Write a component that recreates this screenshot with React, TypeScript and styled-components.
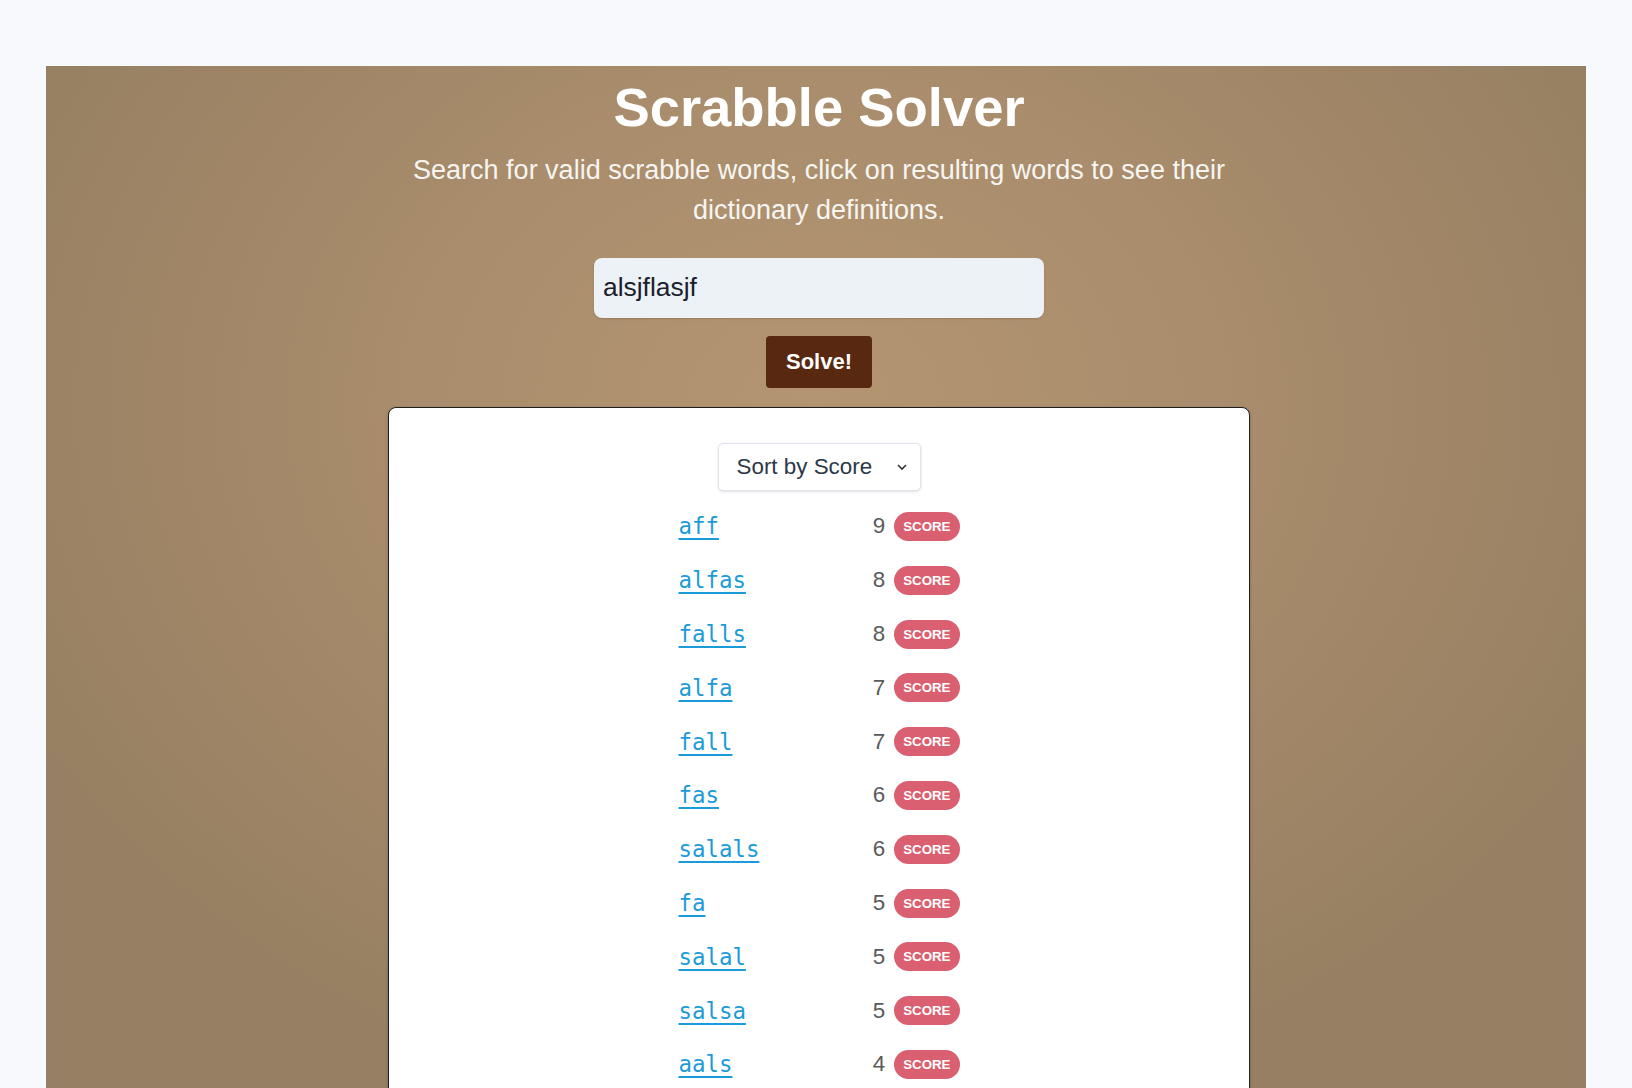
import React from "react";
import styled, { createGlobalStyle } from "styled-components";

const GlobalStyle = createGlobalStyle`
  html, body {
    margin: 0;
    padding: 0;
    background: #f7f9fd;
    font-family: "Liberation Sans", Arial, sans-serif;
  }
  * { box-sizing: border-box; }
`;

const Page = styled.div`
  padding: 66px 46px 0;
  height: 1088px;
  overflow: hidden;
`;

const Panel = styled.main`
  display: flex;
  flex-direction: column;
  align-items: center;
  padding: 11px 0 60px 6px;
  min-height: 1100px;
  background: radial-gradient(
    ellipse 900px 720px at 50% 340px,
    #b49571 0%,
    #a98d6c 45%,
    #967f62 100%
  );
`;

const Title = styled.h1`
  margin: 0;
  font-size: 54.4px;
  line-height: 1.15;
  font-weight: 700;
  color: #ffffff;
`;

const Subtitle = styled.p`
  margin: 10px 0 27px;
  max-width: 840px;
  text-align: center;
  font-size: 27px;
  line-height: 1.5;
  color: #f7f5f2;
`;

const SearchInput = styled.input`
  width: 450px;
  height: 60px;
  padding: 0 9px;
  border: none;
  border-radius: 8px;
  background: #edf2f7;
  box-shadow: 0 1px 2px rgba(0, 0, 0, 0.15);
  font-family: "Liberation Sans", Arial, sans-serif;
  font-size: 26.4px;
  color: #1a202c;
  outline: none;
`;

const SolveButton = styled.button`
  margin-top: 18px;
  height: 52px;
  padding: 0 19.5px;
  border: none;
  border-radius: 4px;
  background: #582810;
  color: #ffffff;
  font-family: "Liberation Sans", Arial, sans-serif;
  font-weight: 700;
  font-size: 22px;
  cursor: pointer;
`;

const ResultsCard = styled.section`
  margin-top: 19px;
  width: 862px;
  min-height: 760px;
  padding: 35px 0 24px;
  display: flex;
  flex-direction: column;
  align-items: center;
  background: #ffffff;
  border: 1px solid #1f1f1f;
  border-radius: 8px;
  box-shadow: 0 1px 3px rgba(0, 0, 0, 0.25);
`;

const SelectWrap = styled.div`
  position: relative;
  width: 203px;
  height: 48px;
  margin-bottom: 9px;
`;

const SortSelect = styled.select`
  appearance: none;
  -webkit-appearance: none;
  width: 100%;
  height: 100%;
  padding: 0 0 0 18px;
  border: 1px solid #dfe4ec;
  border-radius: 5px;
  background: #ffffff;
  box-shadow: 0 1px 3px rgba(0, 0, 0, 0.12);
  font-family: "Liberation Sans", Arial, sans-serif;
  font-size: 22.4px;
  color: #2d3748;
  outline: none;
`;

const Chevron = styled.svg`
  position: absolute;
  right: 13px;
  top: 50%;
  transform: translateY(-50%);
  pointer-events: none;
`;

const WordList = styled.ul`
  list-style: none;
  margin: 0;
  padding: 0;
  display: flex;
  flex-direction: column;
`;

const WordRow = styled.li`
  width: 281px;
  height: 53.8px;
  display: flex;
  align-items: center;
  justify-content: space-between;
`;

const WordLink = styled.a`
  font-family: "DejaVu Sans Mono", "Liberation Mono", monospace;
  font-size: 22.4px;
  color: #1c9bd9;
  text-decoration: underline;
  text-decoration-thickness: 2px;
  text-underline-offset: 4px;
  cursor: pointer;
`;

const ScoreBox = styled.div`
  display: flex;
  align-items: center;
  gap: 9px;
`;

const ScoreNumber = styled.span`
  font-size: 22.4px;
  color: #5a5a5a;
`;

const Badge = styled.span`
  display: inline-flex;
  align-items: center;
  height: 29px;
  padding: 0 9px;
  border-radius: 999px;
  background: #da5f71;
  color: #ffffff;
  font-size: 13.3px;
  font-weight: 700;
`;

const words: [string, number][] = [
  ["aff", 9],
  ["alfas", 8],
  ["falls", 8],
  ["alfa", 7],
  ["fall", 7],
  ["fas", 6],
  ["salals", 6],
  ["fa", 5],
  ["salal", 5],
  ["salsa", 5],
  ["aals", 4],
];

export default function App() {
  return (
    <>
      <GlobalStyle />
      <Page>
        <Panel>
          <Title>Scrabble Solver</Title>
          <Subtitle>
            Search for valid scrabble words, click on resulting words to see their
            dictionary definitions.
          </Subtitle>
          <SearchInput defaultValue="alsjflasjf" />
          <SolveButton>Solve!</SolveButton>
          <ResultsCard>
            <SelectWrap>
              <SortSelect defaultValue="score">
                <option value="score">Sort by Score</option>
                <option value="alpha">Sort by Alphabet</option>
              </SortSelect>
              <Chevron width="12" height="8" viewBox="0 0 12 8">
                <path d="M2 2 L6 6 L10 2" fill="none" stroke="#333" strokeWidth="1.6" />
              </Chevron>
            </SelectWrap>
            <WordList>
              {words.map(([w, s]) => (
                <WordRow key={w}>
                  <WordLink>{w}</WordLink>
                  <ScoreBox>
                    <ScoreNumber>{s}</ScoreNumber>
                    <Badge>SCORE</Badge>
                  </ScoreBox>
                </WordRow>
              ))}
            </WordList>
          </ResultsCard>
        </Panel>
      </Page>
    </>
  );
}
